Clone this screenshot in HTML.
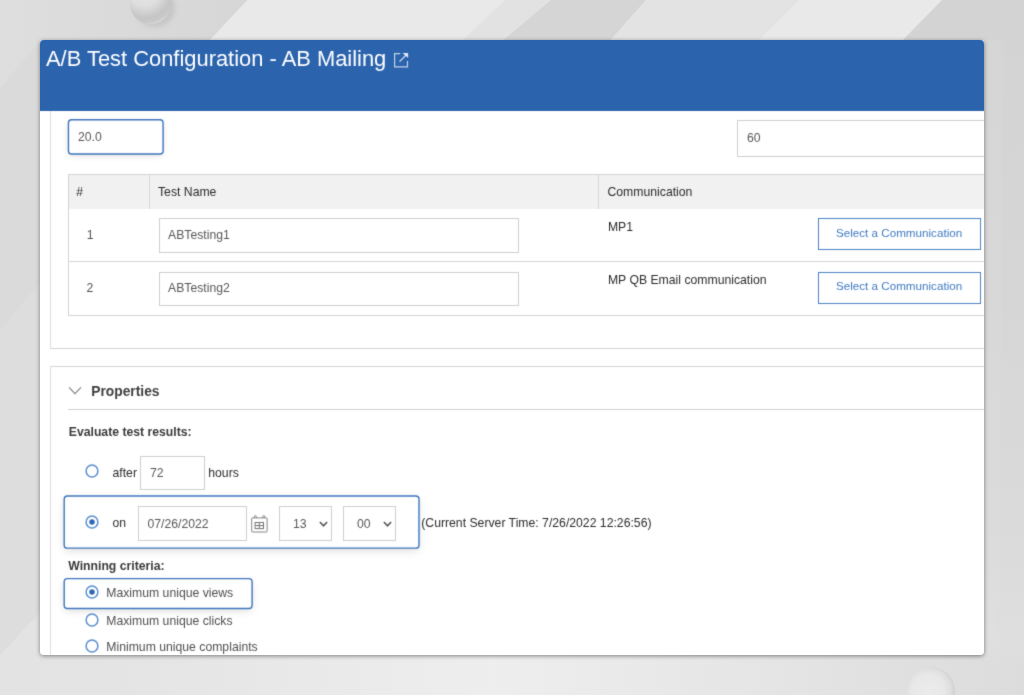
<!DOCTYPE html>
<html>
<head>
<meta charset="utf-8">
<title>A/B Test Configuration</title>
<style>
*{box-sizing:border-box;margin:0;padding:0}
html,body{width:1024px;height:695px;overflow:hidden}
body{font-family:"Liberation Sans",sans-serif;font-size:12.23px;color:#333;background:#e4e4e4;position:relative}
#bg{position:absolute;left:0;top:0;width:1024px;height:695px}
#card{position:absolute;left:40px;top:40px;width:944px;height:614.75px;background:#fff;border-radius:4px;overflow:hidden}
#shadow{position:absolute;left:40px;top:40px;width:944px;height:614.75px;border-radius:4px;box-shadow:0 1px 4px rgba(0,0,0,.45)}
#in{position:absolute;left:-40px;top:-40px;width:1024px;height:695px;filter:url(#soft)}
.abs{position:absolute}
.t{position:absolute;white-space:nowrap;line-height:1}
.b{font-weight:bold}
.hl{position:absolute;border:1px solid #4279bf;border-radius:3.5px;background:#fff;box-shadow:0 0 0 .45px #4279bf,0 3px 8px rgba(0,0,0,.18)}
.radio{position:absolute;width:13px;height:13px;border:1.5px solid #6496cf;border-radius:50%;background:#fff}
.radio.on::after{content:"";position:absolute;left:2.5px;top:2.5px;width:5px;height:5px;border-radius:50%;background:#2f6bb5}
</style>
</head>
<body>
<svg id="bg" width="1024" height="695" viewBox="0 0 1024 695">
<defs>
<linearGradient id="gb" x1="0" y1="0" x2="1" y2="0">
<stop offset="0" stop-color="#e3e3e3"/><stop offset=".12" stop-color="#e4e4e4"/><stop offset=".48" stop-color="#eeeeee"/><stop offset=".8" stop-color="#e3e3e3"/><stop offset=".9" stop-color="#dfdfdf"/><stop offset="1" stop-color="#dcdcdc"/>
</linearGradient>
<linearGradient id="gv" x1="0" y1="0" x2="0" y2="1">
<stop offset="0" stop-color="#e3e3e3"/><stop offset="1" stop-color="#e3e3e3" stop-opacity="0"/>
</linearGradient>
<radialGradient id="s1" cx=".36" cy=".2" r=".82">
<stop offset="0" stop-color="#e7e7e7"/><stop offset=".45" stop-color="#dedede"/><stop offset=".8" stop-color="#c5c5c5"/><stop offset=".93" stop-color="#c9c9c9"/><stop offset="1" stop-color="#d6d6d6"/>
</radialGradient>
<radialGradient id="s2" cx=".44" cy=".5" r=".56">
<stop offset="0" stop-color="#ebebeb"/><stop offset=".6" stop-color="#e8e8e8"/><stop offset=".85" stop-color="#dedede"/><stop offset="1" stop-color="#d0d0d0"/>
</radialGradient>
<linearGradient id="gr" x1="0" y1="0" x2="0" y2="1">
<stop offset="0" stop-color="#d3d3d3"/><stop offset=".45" stop-color="#d6d6d6"/><stop offset=".8" stop-color="#dbdbdb"/><stop offset="1" stop-color="#e0e0e0"/>
</linearGradient>
<linearGradient id="gl" x1="0" y1="0" x2="1" y2="0">
<stop offset="0" stop-color="#dedede"/><stop offset="1" stop-color="#d6d6d6"/>
</linearGradient>
<linearGradient id="mg" x1="0" y1="0" x2="0" y2="1"><stop offset="0" stop-color="#000"/><stop offset=".45" stop-color="#fff"/></linearGradient>
<mask id="mk" maskUnits="userSpaceOnUse" x="0" y="640" width="1024" height="55"><rect x="0" y="640" width="984" height="55" fill="#fff"/><rect x="984" y="640" width="40" height="55" fill="url(#mg)"/></mask>
<filter id="bl" x="-30%" y="-30%" width="160%" height="160%"><feGaussianBlur stdDeviation="2.5"/></filter>
</defs>
<rect width="1024" height="695" fill="#e3e3e3"/>
<!-- top band polygons -->
<polygon points="0,0 247.5,0 210,40 40,40 40,283 0,331" fill="url(#gl)"/>
<polygon points="247.5,0 505,0 463,40 210,40" fill="#e9e9e9"/>
<polygon points="505,0 551,0 503.5,40 463,40" fill="#e2e2e2"/>
<polygon points="551,0 646,0 610.7,40 503.5,40" fill="#d5d5d5"/>
<polygon points="646,0 799,0 759,40 610.7,40" fill="#e3e3e3"/>
<polygon points="799,0 942,0 903,40 759,40" fill="#e9e9e9"/>
<polygon points="942,0 1024,0 1024,695 984,695 984,40 903,40" fill="url(#gr)"/>
<polygon points="984,40 1004,40 998,655 984,655" fill="#fff" opacity=".05"/>
<!-- left strip lower -->
<polygon points="0,88 40,42 40,283 0,331" fill="#dadada"/>
<polygon points="0,331 40,283 40,612 0,655" fill="#dddddd"/>
<polygon points="0,655 40,612 40,695 0,695" fill="#e3e3e3"/>
<!-- bottom strip -->
<rect x="0" y="640" width="1024" height="55" fill="url(#gb)" mask="url(#mk)"/>
<polygon points="0,638 16,638 0,655" fill="#dddddd"/>
<!-- spheres -->
<ellipse cx="155" cy="8" rx="20" ry="19" fill="#bdbdbd" filter="url(#bl)" opacity=".7"/>
<circle cx="150.5" cy="3.3" r="20.8" fill="url(#s1)"/>
<circle cx="931" cy="690.8" r="24" fill="url(#s2)"/>
</svg>

<svg width="0" height="0" style="position:absolute"><defs><filter id="soft" x="0" y="0" width="100%" height="100%" color-interpolation-filters="sRGB"><feConvolveMatrix order="3" kernelMatrix="0.02 0.09 0.02 0.09 0.56 0.09 0.02 0.09 0.02" divisor="1" edgeMode="duplicate" preserveAlpha="false"/></filter></defs></svg>
<div id="shadow"></div>
<div id="card"><div id="in">
<div class="abs" style="left:30.00px;top:30.00px;width:964.00px;height:80.80px;background:#2b63ad"></div>
<div class="t" style="left:46.00px;top:48.46px;font-size:21.90px;color:#fff;">A/B Test Configuration - AB Mailing</div>
<svg class="abs" style="left:393px;top:52px" width="17" height="17" viewBox="0 0 17 17" fill="none"><path d="M7.2 1.6H1.6V14.8H14.5V9.1" stroke="#fff" stroke-opacity=".72" stroke-width="1.2"/><path d="M6.5 9.6L13 3.1" stroke="#fff" stroke-opacity=".85" stroke-width="1.3"/><path d="M9.5 1.1H15.1V6.1Z" fill="#fff" fill-opacity=".85"/></svg>
<div class="abs" style="left:50.00px;top:110.50px;width:1050.00px;height:238.25px;border-left:1px solid #dedede;border-bottom:1px solid #d4d4d4"></div>
<div class="abs" style="left:50.00px;top:365.75px;width:1050.00px;height:334.25px;border-left:1px solid #dedede;border-top:1px solid #d4d4d4"></div>
<div class="abs" style="left:68.45px;top:119.75px;width:94.65px;height:34.30px;border-radius:4px;background:#fff;box-shadow:0 2px 6px rgba(0,0,0,.12)"></div>
<svg class="abs" style="left:66.00px;top:117.00px;overflow:visible" width="100.65" height="40.30"><rect x="2.45" y="2.75" width="94.65" height="34.30" rx="3.2" fill="#fff" stroke="#3d75bd" stroke-width="1.4"/></svg>
<div class="t" style="left:78.00px;top:130.90px;font-size:12.23px;color:#585858;">20.0</div>
<div class="abs" style="left:737.00px;top:120.00px;width:363.00px;height:36.50px;border:1px solid #cfcfcf"></div>
<div class="t" style="left:747.00px;top:131.65px;font-size:12.23px;color:#585858;">60</div>
<div class="abs" style="left:68.00px;top:174.00px;width:1032.00px;height:141.50px;border:1px solid #d4d4d4"></div>
<div class="abs" style="left:69.00px;top:175.00px;width:1031.00px;height:33.75px;background:#f1f1f1"></div>
<div class="abs" style="left:149.00px;top:175.00px;width:1.00px;height:33.75px;background:#d8d8d8"></div>
<div class="abs" style="left:598.00px;top:175.00px;width:1.00px;height:33.75px;background:#d8d8d8"></div>
<div class="abs" style="left:69.00px;top:261.00px;width:1031.00px;height:1.00px;background:#d6d6d6"></div>
<div class="t" style="left:76.25px;top:185.90px;font-size:12.23px;color:#2c2c2c;">#</div>
<div class="t" style="left:158.00px;top:185.90px;font-size:12.23px;color:#2c2c2c;">Test Name</div>
<div class="t" style="left:607.50px;top:185.90px;font-size:12.23px;color:#2c2c2c;">Communication</div>
<div class="t" style="left:86.80px;top:228.90px;font-size:12.23px;color:#505050;">1</div>
<div class="t" style="left:86.50px;top:282.15px;font-size:12.23px;color:#505050;">2</div>
<div class="abs" style="left:158.50px;top:218.00px;width:360.00px;height:34.50px;border:1px solid #cfcfcf"></div>
<div class="abs" style="left:158.50px;top:271.50px;width:360.00px;height:34.25px;border:1px solid #cfcfcf"></div>
<div class="t" style="left:168.00px;top:228.90px;font-size:12.23px;color:#585858;">ABTesting1</div>
<div class="t" style="left:168.00px;top:282.15px;font-size:12.23px;color:#585858;">ABTesting2</div>
<div class="t" style="left:607.90px;top:220.90px;font-size:12.23px;color:#2c2c2c;">MP1</div>
<div class="t" style="left:607.90px;top:273.90px;font-size:12.23px;color:#2c2c2c;">MP QB Email communication</div>
<div class="abs" style="left:817.75px;top:218.00px;width:162.75px;height:32.00px;border:1px solid #4a82c6"></div>
<div class="abs" style="left:817.75px;top:271.50px;width:162.75px;height:32.00px;border:1px solid #4a82c6"></div>
<div class="t" style="left:836.00px;top:226.94px;font-size:11.65px;color:#3f7bc1;">Select a Communication</div>
<div class="t" style="left:836.00px;top:279.94px;font-size:11.65px;color:#3f7bc1;">Select a Communication</div>
<svg class="abs" style="left:68px;top:386px" width="14" height="9" viewBox="0 0 14 9" fill="none" stroke="#808080" stroke-width="1.1"><path d="M1.0 1.4L7 7.7L13.0 1.4"/></svg>
<div class="t b" style="left:91.25px;top:384.82px;font-size:13.80px;color:#3e3e3e;">Properties</div>
<div class="abs" style="left:68.00px;top:408.50px;width:1032.00px;height:1.00px;background:#d2d2d2"></div>
<div class="t b" style="left:68.75px;top:425.95px;font-size:12.23px;color:#3a3a3a;">Evaluate test results:</div>
<svg class="abs" style="left:83.50px;top:462.50px" width="16" height="16" viewBox="0 0 16 16"><circle cx="8" cy="8" r="5.9" fill="#fff" stroke="#5a8fd0" stroke-width="1.5"/></svg>
<div class="t" style="left:112.50px;top:466.95px;font-size:12.23px;color:#2c2c2c;">after</div>
<div class="abs" style="left:140.25px;top:455.75px;width:64.25px;height:34.50px;border:1px solid #cfcfcf"></div>
<div class="t" style="left:150.00px;top:466.95px;font-size:12.23px;color:#585858;">72</div>
<div class="t" style="left:208.25px;top:466.95px;font-size:12.23px;color:#2c2c2c;">hours</div>
<div class="abs" style="left:64.20px;top:496.00px;width:354.80px;height:52.10px;border-radius:4px;background:#fff;box-shadow:0 3px 8px rgba(0,0,0,.13)"></div>
<svg class="abs" style="left:62.00px;top:494.00px;overflow:visible" width="360.80" height="58.10"><rect x="2.20" y="2.00" width="354.80" height="52.10" rx="3.2" fill="#fff" stroke="#3d75bd" stroke-width="1.4"/></svg>
<svg class="abs" style="left:83.75px;top:513.75px" width="16" height="16" viewBox="0 0 16 16"><circle cx="8" cy="8" r="5.9" fill="#fff" stroke="#5a8fd0" stroke-width="1.5"/><circle cx="8" cy="8" r="2.75" fill="#2d68b8"/></svg>
<div class="t" style="left:112.50px;top:516.65px;font-size:12.23px;color:#2c2c2c;">on</div>
<div class="abs" style="left:138.25px;top:506.25px;width:108.50px;height:34.25px;border:1px solid #cfcfcf"></div>
<div class="t" style="left:147.50px;top:517.75px;font-size:12.23px;color:#585858;">07/26/2022</div>
<svg class="abs" style="left:250px;top:514px" width="19" height="19" viewBox="0 0 19 19" fill="none" stroke="#858585" stroke-width="1"><rect x="1.7" y="3.9" width="15.4" height="14.1" rx=".6"/><path d="M4.3 4V2.5Q4.3 1.6 5.3 1.6Q6.3 1.6 6.3 2.5V4M12.8 4V2.5Q12.8 1.6 13.8 1.6Q14.8 1.6 14.8 2.5V4"/><g stroke="#757575"><rect x="5.1" y="8.5" width="8.4" height="6.1"/><path d="M9.3 8.5v6.1M5.1 11.55h8.4"/></g></svg>
<div class="abs" style="left:279.25px;top:506.25px;width:52.50px;height:34.25px;border:1px solid #cfcfcf"></div>
<div class="t" style="left:293.00px;top:517.75px;font-size:12.23px;color:#585858;">13</div>
<div class="abs" style="left:343.25px;top:506.25px;width:52.50px;height:34.25px;border:1px solid #cfcfcf"></div>
<div class="t" style="left:357.00px;top:517.75px;font-size:12.23px;color:#585858;">00</div>
<svg class="abs" style="left:319.00px;top:520.50px" width="9" height="7" viewBox="0 0 9 7" fill="none" stroke="#555" stroke-width="1.55"><path d="M0.9 1.0L4.5 4.9L8.1 1.0"/></svg>
<svg class="abs" style="left:383.00px;top:520.50px" width="9" height="7" viewBox="0 0 9 7" fill="none" stroke="#555" stroke-width="1.55"><path d="M0.9 1.0L4.5 4.9L8.1 1.0"/></svg>
<div class="t" style="left:421.25px;top:516.65px;font-size:12.23px;color:#2c2c2c;">(Current Server Time: 7/26/2022 12:26:56)</div>
<div class="t b" style="left:68.25px;top:559.65px;font-size:12.23px;color:#3a3a3a;">Winning criteria:</div>
<div class="abs" style="left:64.20px;top:578.60px;width:187.90px;height:29.90px;border-radius:4px;background:#fff;box-shadow:0 3px 8px rgba(0,0,0,.13)"></div>
<svg class="abs" style="left:62.00px;top:576.00px;overflow:visible" width="193.90" height="35.90"><rect x="2.20" y="2.60" width="187.90" height="29.90" rx="3.2" fill="#fff" stroke="#3d75bd" stroke-width="1.4"/></svg>
<svg class="abs" style="left:83.75px;top:584.00px" width="16" height="16" viewBox="0 0 16 16"><circle cx="8" cy="8" r="5.9" fill="#fff" stroke="#5a8fd0" stroke-width="1.5"/><circle cx="8" cy="8" r="2.75" fill="#2d68b8"/></svg>
<div class="t" style="left:106.25px;top:586.65px;font-size:12.23px;color:#505050;">Maximum unique views</div>
<svg class="abs" style="left:83.75px;top:612.00px" width="16" height="16" viewBox="0 0 16 16"><circle cx="8" cy="8" r="5.9" fill="#fff" stroke="#5a8fd0" stroke-width="1.5"/></svg>
<div class="t" style="left:106.25px;top:614.65px;font-size:12.23px;color:#505050;">Maximum unique clicks</div>
<svg class="abs" style="left:83.75px;top:637.60px" width="16" height="16" viewBox="0 0 16 16"><circle cx="8" cy="8" r="5.9" fill="#fff" stroke="#5a8fd0" stroke-width="1.5"/></svg>
<div class="t" style="left:106.25px;top:641.05px;font-size:12.23px;color:#505050;">Minimum unique complaints</div>
</div></div>
</body>
</html>
